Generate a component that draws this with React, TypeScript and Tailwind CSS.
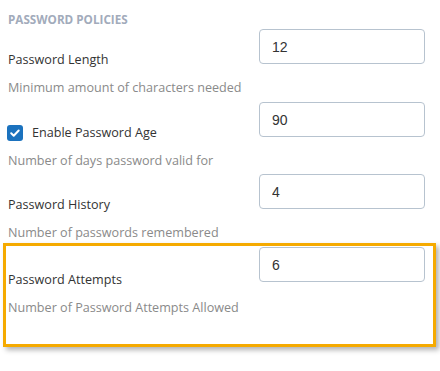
import React from 'react';

type RowProps = {
  label: React.ReactNode;
  hint: string;
  value: string;
  height: string;
  top?: string;
};

const Row: React.FC<RowProps> = ({ label, hint, value, height, top = 'pt-[22px]' }) => (
  <div className={`flex justify-between pl-2 pr-[15px] ${height}`}>
    <div className={top}>
      <div className="text-[12.6px] leading-[18px] text-[#333]">{label}</div>
      <div className="mt-[10px] text-[12.6px] leading-[18px] text-[#8a8a8a]">{hint}</div>
    </div>
    <input
      readOnly
      value={value}
      className="h-[35px] w-[166px] rounded-[4px] border border-[#b7c3cf] pl-3 text-[14px] text-[#333] outline-none"
      style={{ fontFamily: '"Liberation Sans", Arial, sans-serif' }}
    />
  </div>
);

export default function App() {
  return (
    <div
      className="h-[371px] w-[440px] overflow-hidden bg-white pt-[11px]"
      style={{ fontFamily: '"Open Sans", sans-serif' }}
    >
      <h3 className="pl-2 text-[11.7px] font-bold leading-4 text-[#a2abbb]">PASSWORD POLICIES</h3>
      <div className="mt-[2px]">
        <Row label="Password Length" hint="Minimum amount of characters needed" value="12" height="h-[73px]" />
        <Row
          label={
            <span className="-ml-[1px] flex items-center gap-[9px]">
              <svg width="16" height="16" viewBox="0 0 16 16">
                <rect width="16" height="16" rx="3" fill="#1b72be" />
                <path d="M4.2 8.3l2.5 2.4 5-5.2" fill="none" stroke="#fff" strokeWidth="2" strokeLinecap="round" strokeLinejoin="round" />
              </svg>
              <span>Enable Password Age</span>
            </span>
          }
          hint="Number of days password valid for"
          value="90"
          height="h-[72px]"
        />
        <Row label="Password History" hint="Number of passwords remembered" value="4" height="h-[69px]" />
        {/* highlight box round the last row */}
        <div className="ml-[3px] h-[104px] w-[433px] border-[3px] border-[#f5aa00] pt-[1px] shadow-[3px_3px_5px_rgba(0,0,0,0.3)]">
          <div className="-ml-[6px] -mr-[7px]">
            <Row
              label="Password Attempts"
              hint="Number of Password Attempts Allowed"
              value="6"
              height="h-[90px]"
              top="pt-[24px]"
            />
          </div>
        </div>
      </div>
    </div>
  );
}
